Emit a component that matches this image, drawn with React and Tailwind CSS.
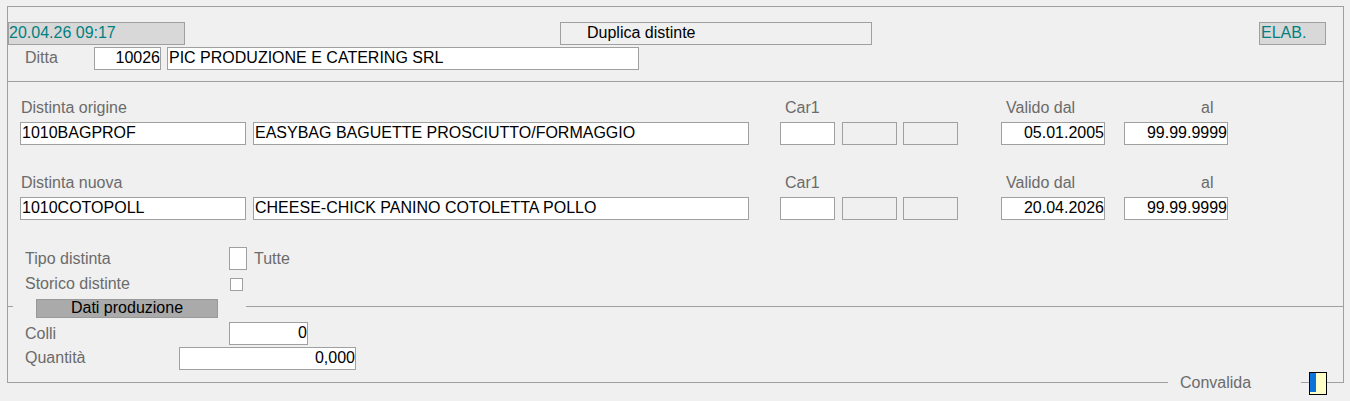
import React from "react";

const font = { fontFamily: '"Liberation Sans", Arial, sans-serif' };

function Box({ w, children, right, grey, cls = "" }) {
  return (
    <div
      className={`h-[23px] shrink-0 border border-[#a0a0a0] leading-[20px] text-[16px] text-black whitespace-nowrap overflow-hidden ${
        grey ? "bg-[#f0f0f0]" : "bg-white"
      } ${right ? "text-right pr-0" : "pl-px"} ${cls}`}
      style={{ width: w }}
    >
      {children}
    </div>
  );
}

function Label({ children, cls = "" }) {
  return (
    <div className={`h-[18px] leading-[20px] text-[16px] text-[#6b6b6b] whitespace-nowrap shrink-0 ${cls}`}>
      {children}
    </div>
  );
}

function DistintaBlock({ title, code, desc, from, to, cls }) {
  return (
    <div className={cls}>
      <div className="flex">
        <Label cls="ml-[13px] w-[764px]">{title}</Label>
        <Label cls="w-[221px]">Car1</Label>
        <Label cls="w-[195px]">Valido dal</Label>
        <Label>al</Label>
      </div>
      <div className="flex mt-[6px]">
        <div className="ml-[12px]" />
        <Box w="226px">{code}</Box>
        <Box w="496px" cls="ml-[7px]">{desc}</Box>
        <Box w="55px" cls="ml-[31px]" />
        <Box w="55px" grey cls="ml-[7px]" />
        <Box w="55px" grey cls="ml-[6px]" />
        <Box w="104px" right cls="ml-[43px]">{from}</Box>
        <Box w="104px" right cls="ml-[19px]">{to}</Box>
      </div>
    </div>
  );
}

export default function App() {
  return (
    <div className="w-[1350px] h-[401px] bg-[#f0f0f0] overflow-hidden" style={font}>
      <div className="ml-[7px] pt-[6px] w-[1337px]">
        <div className="h-[376px] border-t border-l border-r border-[#a0a0a0]">
          {/* header */}
          <div className="h-[75px] pt-[15px] border-b border-[#a0a0a0]">
            <div className="flex">
              <div className="h-[23px] w-[177px] border border-[#a0a0a0] bg-[#d8d8d8] text-[16px] leading-[20px] text-[#008080] whitespace-nowrap">
                20.04.26 09:17
              </div>
              <div className="ml-[375px] h-[23px] w-[312px] border border-[#a0a0a0] bg-[#f0f0f0] text-[16px] leading-[20px] text-black pl-[26px] whitespace-nowrap">
                Duplica distinte
              </div>
              <div className="ml-[387px] h-[23px] w-[67px] border border-[#a0a0a0] bg-[#d8d8d8] text-[16px] leading-[20px] text-[#008080] pl-px">
                ELAB.
              </div>
            </div>
            <div className="flex mt-[2px]">
              <Label cls="ml-[17px] w-[69px] mt-px">Ditta</Label>
              <Box w="67px" right>10026</Box>
              <Box w="472px" cls="ml-[6px]">PIC PRODUZIONE E CATERING SRL</Box>
            </div>
          </div>

          {/* body */}
          <div className="pt-[16px]">
            <DistintaBlock
              title="Distinta origine"
              code="1010BAGPROF"
              desc="EASYBAG BAGUETTE PROSCIUTTO/FORMAGGIO"
              from="05.01.2005"
              to="99.99.9999"
            />
            <DistintaBlock
              cls="mt-[28px]"
              title="Distinta nuova"
              code="1010COTOPOLL"
              desc="CHEESE-CHICK PANINO COTOLETTA POLLO"
              from="20.04.2026"
              to="99.99.9999"
            />

            <div className="flex mt-[27px] h-[23px]">
              <Label cls="ml-[17px] w-[204px] mt-[2px]">Tipo distinta</Label>
              <div className="w-[18px] h-[23px] border border-[#a0a0a0] bg-white shrink-0" />
              <Label cls="ml-[7px] mt-[2px]">Tutte</Label>
            </div>
            <div className="flex mt-[4px] h-[18px]">
              <Label cls="ml-[17px] w-[205px]">Storico distinte</Label>
              <div className="mt-[4px] w-[13px] h-[13px] border border-[#a0a0a0] bg-white shrink-0" />
            </div>

            <div className="flex items-start mt-[7px] h-[19px]">
              <div className="mt-[7px] w-[5px] h-px bg-[#a0a0a0]" />
              <div className="ml-[23px] w-[182px] h-[19px] border border-[#999999] bg-[#aaaaaa] text-center text-[16px] leading-[16px] text-black whitespace-nowrap">
                Dati produzione
              </div>
              <div className="ml-[28px] mt-[7px] flex-1 h-px bg-[#a0a0a0]" />
            </div>

            <div className="flex mt-[4px]">
              <Label cls="ml-[17px] w-[204px] mt-[2px]">Colli</Label>
              <Box w="79px" right>0</Box>
            </div>
            <div className="flex mt-[2px]">
              <Label cls="ml-[17px] w-[154px] mt-px">Quantità</Label>
              <Box w="177px" right>0,000</Box>
            </div>
          </div>
        </div>

        {/* bottom legend row */}
        <div className="flex items-center h-[23px] -mt-[11px]">
          <div className="flex-1 h-px bg-[#a0a0a0]" />
          <div className="ml-[12px] w-[121px] text-[16px] leading-[18px] text-[#6b6b6b] whitespace-nowrap">
            Convalida
          </div>
          <div className="w-[8px] h-px bg-[#a0a0a0]" />
          <div className="w-[18px] h-[23px] mt-[2px] border border-black bg-[#ffffc8] flex shrink-0">
            <div className="w-[6px] h-[19px] bg-[#0a74da]" />
          </div>
          <div className="w-[17px] h-px bg-[#a0a0a0]" />
        </div>
      </div>
    </div>
  );
}
